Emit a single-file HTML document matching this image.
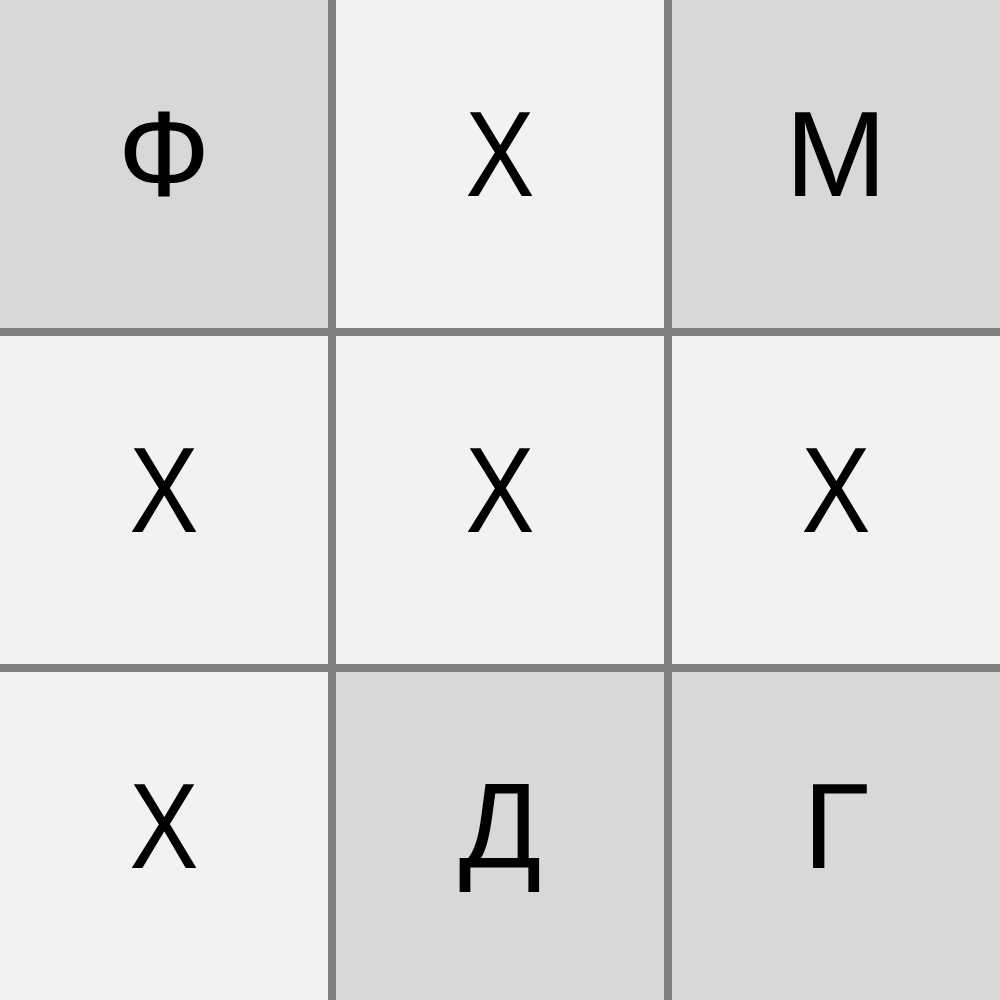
<!DOCTYPE html>
<html><head><style>
body{margin:0;width:1000px;height:1000px;background:#808080;position:relative;overflow:hidden}
.c{position:absolute;width:328px;height:328px}
.t{position:absolute;left:0;width:100%;text-align:center;font-family:"Liberation Sans","DejaVu Sans",sans-serif;font-size:122px;line-height:126px;color:#000;top:110px;transform:translateY(-19px)}
.x{transform:translateY(-19px) scaleX(0.85)}
.d{background:#d8d8d8}.l{background:#f2f2f2}
</style></head><body>
<div class="c d" style="left:0;top:0"><div class="t">Ф</div></div>
<div class="c l" style="left:336px;top:0"><div class="t x">Х</div></div>
<div class="c d" style="left:672px;top:0"><div class="t">М</div></div>
<div class="c l" style="left:0;top:336px"><div class="t x">Х</div></div>
<div class="c l" style="left:336px;top:336px"><div class="t x">Х</div></div>
<div class="c l" style="left:672px;top:336px"><div class="t x">Х</div></div>
<div class="c l" style="left:0;top:672px"><div class="t x">Х</div></div>
<div class="c d" style="left:336px;top:672px"><div class="t">Д</div></div>
<div class="c d" style="left:672px;top:672px"><div class="t">Г</div></div>
</body></html>
